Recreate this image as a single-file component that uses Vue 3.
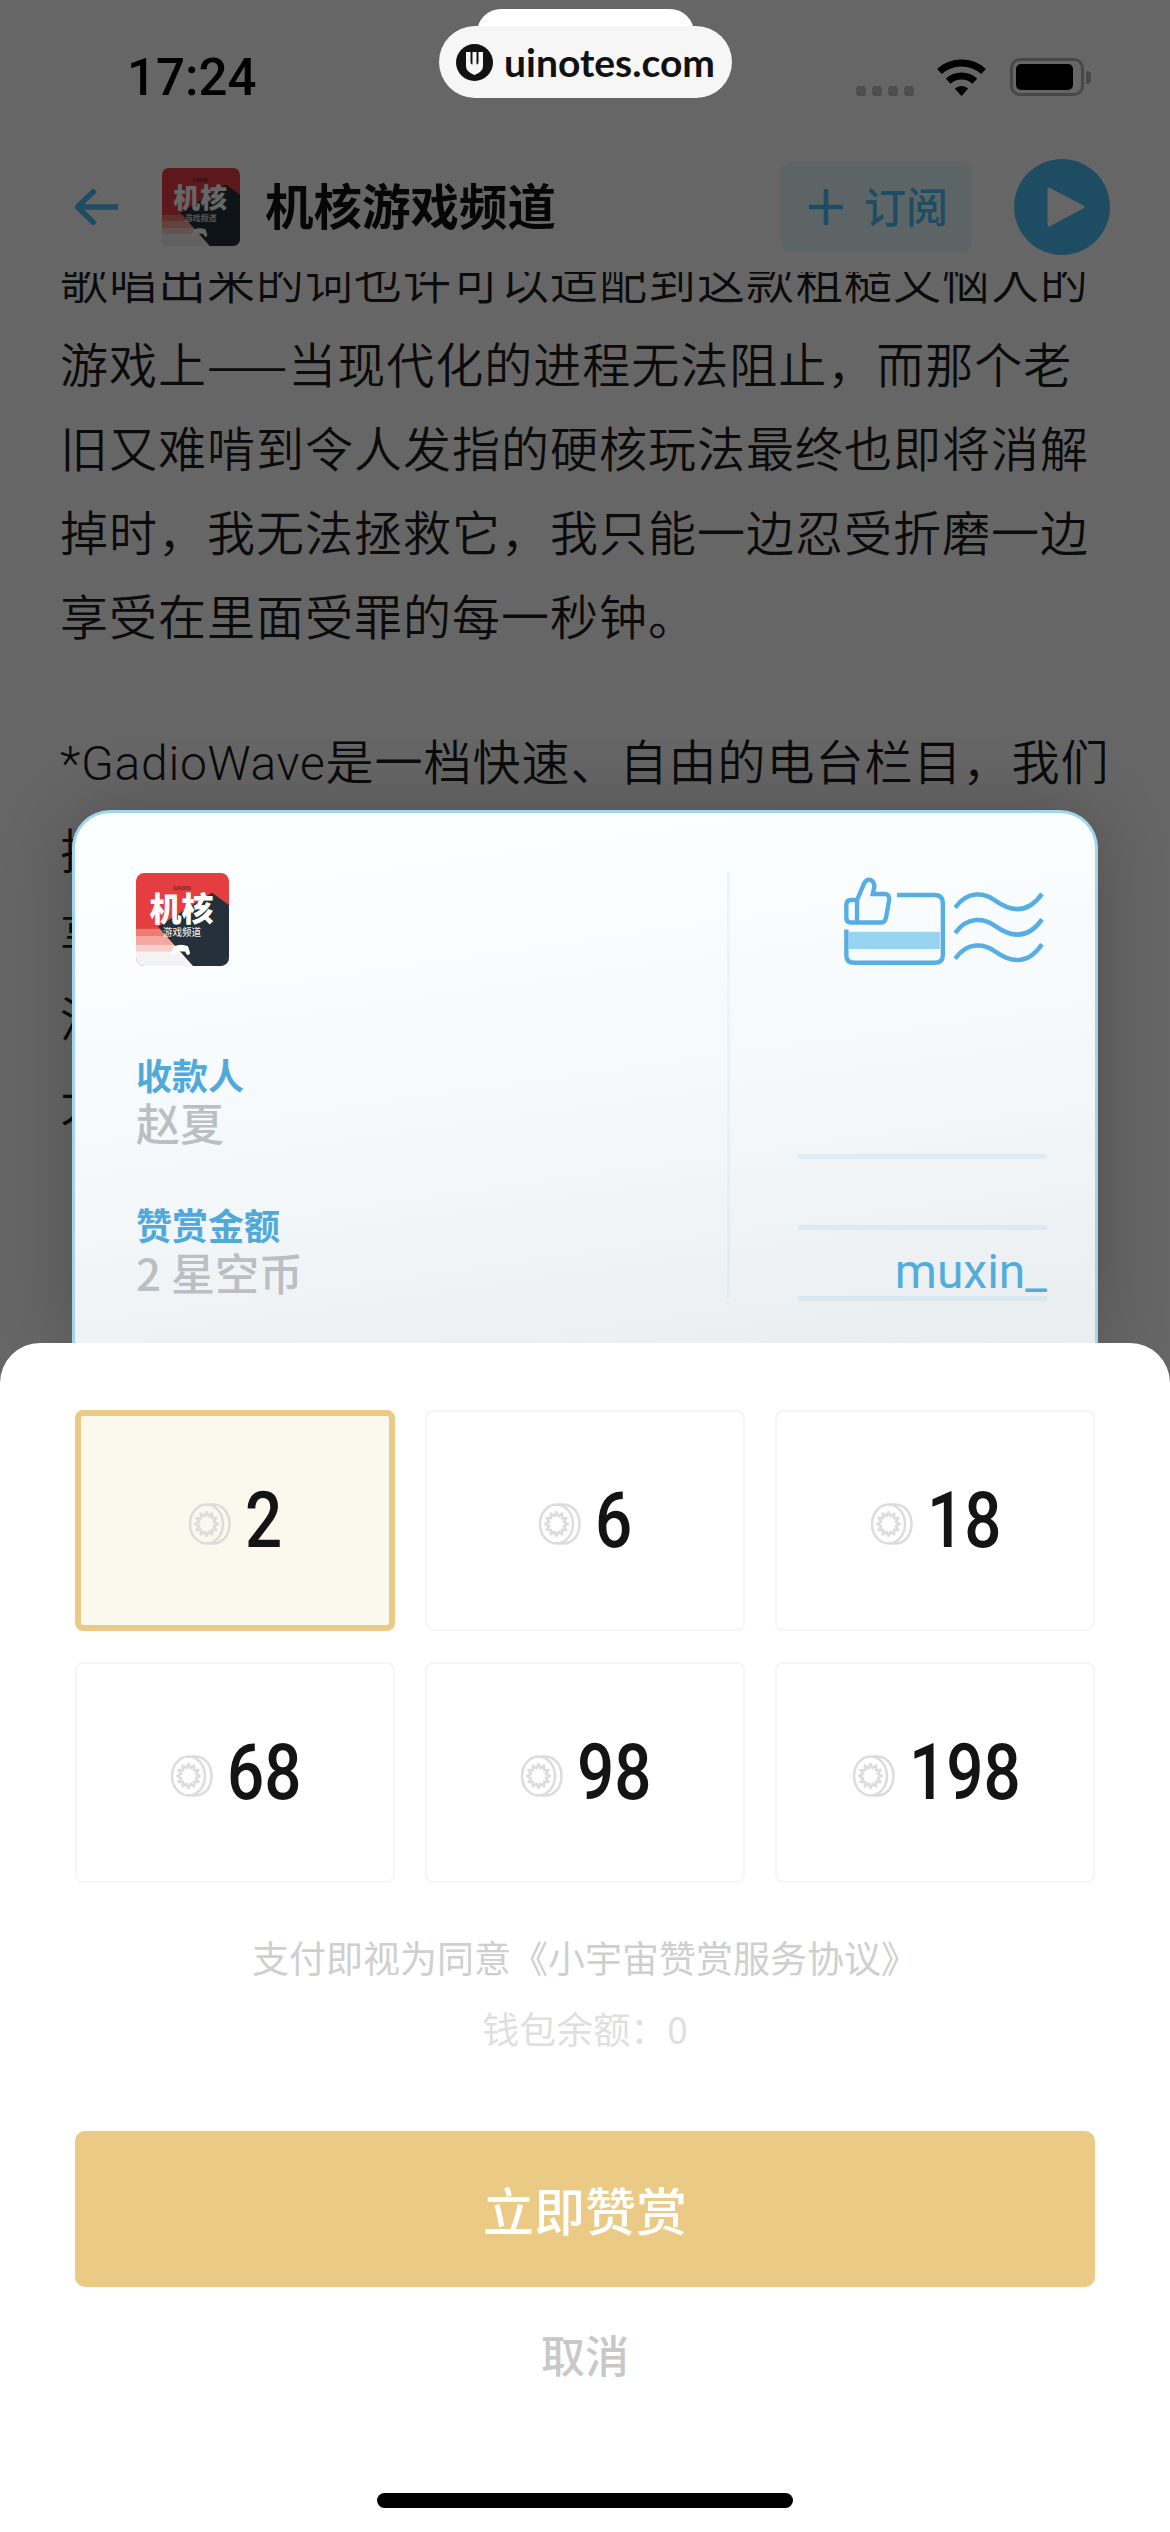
<template>
  <div class="phone">
    <!-- shared logo, used in the header and on the card -->
    <svg class="defs" width="0" height="0">
      <defs>
        <clipPath id="logoClip"><rect width="93" height="90" rx="8" /></clipPath>
        <symbol id="channelLogo" viewBox="0 0 93 90" preserveAspectRatio="none">
          <g clip-path="url(#logoClip)">
            <rect width="93" height="90" fill="#e53e41" />
            <rect y="54" width="93" height="8" fill="#ee7c72" />
            <rect y="61" width="93" height="8" fill="#f3a79f" />
            <rect y="69" width="93" height="8" fill="#f6cfca" />
            <rect y="76" width="93" height="14" fill="#f4f2f2" />
            <polygon points="76,19 93,31 93,90 57,90 22,52" fill="#24303a" />
            <text x="46" y="16" text-anchor="middle" font-size="6" font-weight="700" fill="#7b2226" font-family="Roboto, sans-serif">GADIO</text>
            <text x="45.500" y="46" text-anchor="middle" font-size="32" font-weight="900" fill="#fff" font-family="'Noto Sans CJK SC', sans-serif">机核</text>
            <text x="46" y="61" text-anchor="middle" font-size="9.500" font-weight="500" fill="#f1e6e4" font-family="'Noto Sans CJK SC', sans-serif">游戏频道</text>
            <path d="M38 71q7-3 14 0l2 6q0 3-3 2l-2-3h-8l-3 3q-3 1-3-2z" fill="#fff" />
          </g>
        </symbol>
      </defs>
    </svg>

    <div class="top">
      <div class="status-bar">
        <span class="time">17:24</span>
        <div class="status-right">
          <div class="cell-dots"><i v-for="n in 4" :key="n"></i></div>
          <svg class="wifi" width="51" height="37" viewBox="0 0 51 37">
            <path d="M3.500 12.500A33 33 0 0 1 47.500 12.500" fill="none" stroke="#000" stroke-width="7" />
            <path d="M12.100 22.100A20 20 0 0 1 38.900 22.100" fill="none" stroke="#000" stroke-width="7" />
            <path d="M25.500 37L18.800 29.600A10 10 0 0 1 32.200 29.600Z" fill="#000" />
          </svg>
          <div class="battery"><i></i></div>
          <div class="battery-cap"></div>
        </div>
      </div>
      <div class="nav">
        <svg class="back" width="43" height="36" viewBox="0 0 43 36">
          <path d="M43 18H3M20 1L2.500 18L20 35" fill="none" stroke="#4dc0f8" stroke-width="5.500" />
        </svg>
        <svg class="nav-logo" width="78" height="78"><use href="#channelLogo" /></svg>
        <span class="nav-title">机核游戏频道</span>
        <div class="subscribe">
          <svg width="34" height="36" viewBox="0 0 34 36"><path d="M0 18H34M17 0V36" stroke="#4dc0f8" stroke-width="4.500" /></svg>
          <span>订阅</span>
        </div>
        <div class="play">
          <svg width="38" height="42" viewBox="0 0 38 42"><path d="M2 3L36 21L2 39Z" fill="#fff" stroke="#fff" stroke-width="3" stroke-linejoin="round" /></svg>
        </div>
      </div>
    </div>

    <div class="article">
      <p v-for="(para, i) in paragraphs" :key="i" class="para">
        <span v-for="line in para" :key="line" class="line">
          <span v-for="(piece, j) in splitLatin(line)" :key="j" :class="{ latin: j % 2 === 1 }">{{ piece }}</span>
        </span>
      </p>
    </div>

    <div class="overlay">
      <div class="card">
        <div class="card-left">
          <svg class="card-logo" width="93" height="93"><use href="#channelLogo" /></svg>
          <div class="field-label first">收款人</div>
          <div class="field-value">赵夏</div>
          <div class="field-label second">赞赏金额</div>
          <div class="field-value">{{ selected }} 星空币</div>
        </div>
        <div class="card-divider"></div>
        <div class="card-right">
          <svg class="stamp" width="207" height="93" viewBox="420 220 620 270" preserveAspectRatio="none">
            <rect x="443" y="382" width="273" height="50" fill="#97d4f0" />
            <g fill="none" stroke="#56aee2" stroke-width="13">
              <path d="M588 275H700Q725 275 725 300V450Q725 472 700 472H460Q436 472 436 450V375" />
              <path d="M468 290L490 240Q497 228 510 232Q520 238 520 250L515 272H550Q566 272 564 290L555 340Q552 355 540 355H450Q436 355 436 342V305Q436 290 450 290H468V350" />
              <path d="M762 312C800 260 850 270 880 290C930 325 980 330 1022 272" />
              <path d="M762 386C800 334 850 344 880 364C930 399 980 404 1022 346" />
              <path d="M762 460C800 408 850 418 880 438C930 473 980 478 1022 418" />
            </g>
          </svg>
          <div class="sign-line"></div>
          <div class="sign-line"></div>
          <div class="sign-line"><span class="sign-name">muxin_</span></div>
        </div>
      </div>

      <div class="sheet">
        <div class="amounts">
          <div
            v-for="amount in amounts"
            :key="amount"
            :class="['amount', { active: amount === selected }]"
          >
            <svg class="coin" width="42" height="42" viewBox="0 0 42 42">
              <g fill="none" stroke="#dcdcdc" stroke-width="2.500">
                <ellipse cx="17.500" cy="21" rx="16.500" ry="19.500" />
                <path d="M20 1.500H24C34 1.500 40.500 10 40.500 21C40.500 32 34 40.500 24 40.500H20" />
                <polygon :points="starPoints" stroke-linejoin="round" />
              </g>
            </svg>
            <span class="amount-num" :style="{ width: String(amount).length * 36 + 'px' }">
              <b>{{ amount }}</b>
            </span>
          </div>
        </div>
        <div class="agreement">支付即视为同意《小宇宙赞赏服务协议》</div>
        <div class="balance">钱包余额：0</div>
        <div class="pay-btn">立即赞赏</div>
        <div class="cancel">取消</div>
        <div class="home-bar"></div>
      </div>
    </div>

    <div class="watermark">
      <div class="watermark-tab"></div>
      <div class="watermark-pill">
        <svg width="37" height="37" viewBox="0 0 37 37">
          <circle cx="18.500" cy="18.500" r="18.500" fill="#111" />
          <path d="M10 8h4.500v10q0 2.500 2 2.500V8h4v12.500q2 0 2-2.500V8H27v14q0 6-8.500 9Q10 28 10 22z" fill="#f6f6f6" />
        </svg>
        <span>uinotes.com</span>
      </div>
    </div>
  </div>
</template>

<script setup>
const amounts = [2, 6, 18, 68, 98, 198];
const selected = 2;

const paragraphs = [
  [
    '歌唱出来的词也许可以适配到这款粗糙又恼人的',
    '游戏上——当现代化的进程无法阻止，而那个老',
    '旧又难啃到令人发指的硬核玩法最终也即将消解',
    '掉时，我无法拯救它，我只能一边忍受折磨一边',
    '享受在里面受罪的每一秒钟。'
  ],
  ['*GadioWave是一档快速、自由的电台栏目，我们', '把', '享', '没', '大']
];

// odd pieces are the latin runs, they get their own font
const splitLatin = (line) => line.split(/([*A-Za-z]+)/);

// spiky star in the middle of the coin
const starPoints = Array.from({ length: 24 }, (_, i) => {
  const r = i % 2 === 0 ? 12 : 8;
  const a = (i * Math.PI) / 12;
  return `${(17.5 + r * 0.95 * Math.sin(a)).toFixed(1)},${(21 - r * Math.cos(a)).toFixed(1)}`;
}).join(' ');
</script>

<style scoped>
.phone {
  position: relative;
  width: 1170px;
  height: 2532px;
  overflow: hidden;
  background: #fff;
  color: #1c1c1c;
  font-family: "Noto Sans CJK SC", sans-serif;
}

.defs {
  position: absolute;
}

.status-bar {
  height: 152px;
  box-sizing: border-box;
  padding: 58px 79px 0 127px;
  display: flex;
  align-items: flex-start;
}

.time {
  font-family: Roboto, sans-serif;
  font-size: 51px;
  font-weight: 500;
  line-height: 40px;
  color: #000;
}

.status-right {
  margin-left: auto;
  display: flex;
  align-items: flex-start;
}

.cell-dots {
  display: flex;
  gap: 6px;
  margin-top: 28px;
  margin-right: 22px;
}

.cell-dots i {
  width: 10px;
  height: 10px;
  border-radius: 3px;
  background: #c4c4c4;
}

.wifi {
  margin-top: 1px;
  margin-right: 23px;
}

.battery {
  width: 74px;
  height: 38px;
  box-sizing: border-box;
  border: 3px solid #b4b4b4;
  border-radius: 10px;
  padding: 3px;
  display: flex;
}

.battery i {
  width: 57px;
  background: #000;
  border-radius: 5px;
}

.battery-cap {
  width: 5px;
  height: 13px;
  margin: 13px 0 0 2px;
  border-radius: 0 4px 4px 0;
  background: #b4b4b4;
}

.nav {
  height: 110px;
  margin-bottom: 10px;
  display: flex;
  align-items: center;
  padding: 0 60px 0 75px;
}

.nav-logo {
  margin-left: 44px;
}

.nav-title {
  margin-left: 25px;
  margin-bottom: 6px;
  font-size: 48.500px;
  font-weight: 700;
  color: #111;
}

.subscribe {
  margin-left: auto;
  width: 191px;
  height: 90px;
  box-sizing: border-box;
  padding-left: 28px;
  display: flex;
  align-items: center;
  gap: 21px;
  border-radius: 10px;
  background: #e6fbff;
  color: #4dc0f8;
  font-size: 42px;
  font-weight: 500;
}

.subscribe span {
  margin-bottom: 5px;
}

.play {
  margin-left: 42px;
  width: 96px;
  height: 96px;
  border-radius: 50%;
  background: #4dc0f8;
  display: flex;
  align-items: center;
  justify-content: center;
  padding-left: 8px;
  box-sizing: border-box;
}

.article {
  height: 900px;
  overflow: hidden;
  padding-left: 60px;
}

.para {
  margin: 0 0 61px;
  font-size: 48px;
  font-weight: 350;
  line-height: 84px;
  letter-spacing: 1px;
}

.para:first-child {
  margin-top: -36px;
}

.line {
  display: block;
  white-space: nowrap;
}

.latin {
  font-family: Roboto, sans-serif;
  letter-spacing: 0.7px;
}

.overlay {
  position: absolute;
  inset: 0;
  background: rgba(0, 0, 0, 0.6);
  display: flex;
  flex-direction: column;
  justify-content: flex-end;
}

.card {
  margin: 0 72px;
  height: 533px;
  box-sizing: border-box;
  border: 3px solid #a0d6ec;
  border-bottom: none;
  border-radius: 38px 38px 0 0;
  background: linear-gradient(172deg, #fbffff 12%, #f4f8fb 58%, #e9edef 100%);
  box-shadow: 0 0 70px rgba(0, 0, 0, 0.22);
  display: flex;
  padding: 60px 0 0 61px;
}

.card-left {
  width: 591px;
  flex: none;
}

.card-logo {
  display: block;
}

.field-label {
  font-size: 36px;
  font-weight: 700;
  line-height: 44px;
  color: #4fa9da;
}

.field-label.first {
  margin-top: 86px;
}

.field-label.second {
  margin-top: 55px;
}

.field-value {
  margin-top: 1px;
  font-size: 44px;
  font-weight: 500;
  line-height: 50px;
  color: #bcbfc1;
}

.card-divider {
  width: 3px;
  height: 426px;
  margin-top: -1px;
  background: rgba(79, 169, 218, 0.07);
  flex: none;
}

.card-right {
  margin-left: 68px;
  width: 249px;
  flex: none;
}

.stamp {
  display: block;
  margin-top: 3px;
  margin-bottom: 119px;
  margin-left: 43px;
}

.sign-line {
  height: 71px;
  box-sizing: border-box;
  border-bottom: 5px solid rgba(79, 169, 218, 0.12);
  display: flex;
  justify-content: flex-end;
  align-items: flex-end;
}

.sign-name {
  font-family: Roboto, sans-serif;
  font-size: 48px;
  line-height: 54px;
  margin-bottom: -3px;
  color: #53acdc;
}

.sheet {
  position: relative;
  height: 1189px;
  box-sizing: border-box;
  padding: 67px 75px 0;
  background: #fff;
  border-radius: 40px 40px 0 0;
  display: flex;
  flex-direction: column;
  align-items: center;
}

.amounts {
  align-self: stretch;
  display: grid;
  grid-template-columns: repeat(3, 1fr);
  grid-auto-rows: 221px;
  gap: 31px 30px;
}

.amount {
  box-sizing: border-box;
  border: 2px solid #f5f5f5;
  border-radius: 8px;
  display: flex;
  align-items: center;
  justify-content: center;
  gap: 14px;
}

.amount.active {
  border: 6px solid #eaca85;
  background: #fbf8ee;
}

.coin {
  margin-top: 7px;
  flex: none;
}

.amount-num {
  display: inline-block;
  white-space: nowrap;
  font-family: Roboto, sans-serif;
  font-size: 78px;
  line-height: 78px;
  color: #141414;
}

.amount-num b {
  display: inline-block;
  font-weight: 500;
  transform: scaleX(0.84);
  transform-origin: left center;
}

.agreement {
  margin-top: 49px;
  font-size: 37px;
  line-height: 50px;
  color: #cfcfcf;
}

.balance {
  margin-top: 21px;
  font-size: 37px;
  line-height: 50px;
  color: #dfdfdf;
}

.pay-btn {
  margin-top: 78px;
  align-self: stretch;
  height: 156px;
  border-radius: 10px;
  background: #eaca85;
  color: #fff;
  font-size: 51px;
  font-weight: 500;
  display: flex;
  align-items: center;
  justify-content: center;
}

.cancel {
  margin-top: 37px;
  font-size: 44px;
  font-weight: 500;
  line-height: 60px;
  color: #c8c8c8;
}

.home-bar {
  margin-top: 109px;
  width: 416px;
  height: 15px;
  border-radius: 8px;
  background: #000;
}

.watermark {
  position: absolute;
  top: 9px;
  left: 439px;
  width: 293px;
}

.watermark-tab {
  width: 217px;
  height: 40px;
  margin: 0 auto;
  border-radius: 24px 24px 0 0;
  background: #fff;
}

.watermark-pill {
  position: absolute;
  top: 17px;
  left: 0;
  width: 293px;
  height: 72px;
  box-sizing: border-box;
  border-radius: 36px;
  background: #f6f6f6;
  display: flex;
  align-items: center;
  padding-left: 17px;
  gap: 11px;
  font-family: Lato, sans-serif;
  font-size: 39px;
  font-weight: 700;
  color: #111;
}
</style>
